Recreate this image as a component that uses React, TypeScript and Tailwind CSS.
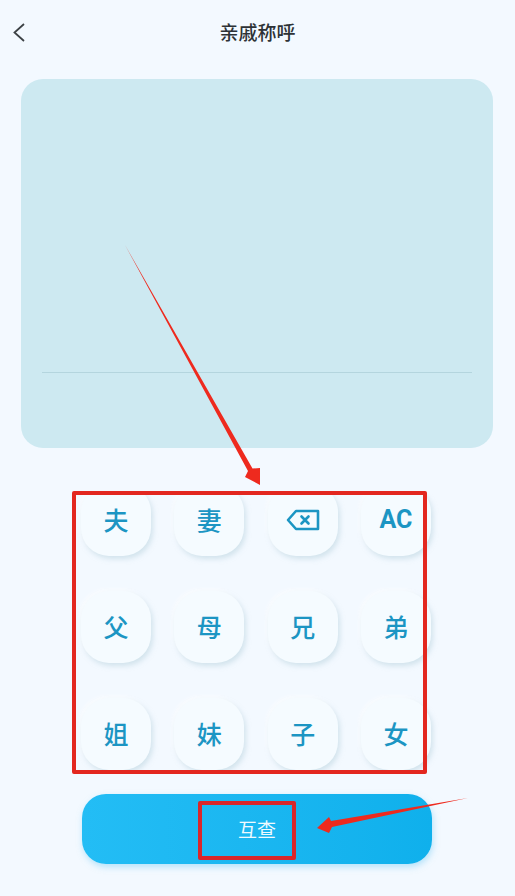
const rows = [
  ['夫', '妻', 'del', 'AC'],
  ['父', '母', '兄', '弟'],
  ['姐', '妹', '子', '女'],
];

function BackspaceIcon() {
  return (
    <svg width="34" height="22" viewBox="0 0 34 22" fill="none" stroke="#1c95c3" strokeWidth="2.6" strokeLinejoin="round" strokeLinecap="round">
      <path d="M10 2 H32 V20 H10 L2 11 Z" />
      <path d="M15.5 7.5 L22.5 14.5 M22.5 7.5 L15.5 14.5" />
    </svg>
  );
}

export default function App() {
  return (
    <div
      className="relative w-[515px] h-[896px] overflow-hidden bg-[#f3f9ff]"
      style={{ fontFamily: '"Noto Sans CJK SC", "Noto Sans", sans-serif' }}
    >
      {/* header */}
      <div className="relative flex items-center justify-center h-[64px] mb-[15px]">
        <svg className="absolute left-[12px] top-[22px]" width="14" height="21" viewBox="0 0 14 21" fill="none" stroke="#3c4145" strokeWidth="1.8">
          <path d="M12 2 L2.5 10.5 L12 19" />
        </svg>
        <span className="text-[19px] font-medium text-[#2d3236]">亲戚称呼</span>
      </div>

      {/* display panel */}
      <div className="ml-[21px] w-[472px] h-[369px] rounded-[22px] bg-[#cde9f1] px-[21px] pt-[293px]">
        <div className="h-px bg-[#b4d5de]" />
      </div>

      {/* keypad, top row is scrolled partly out */}
      <div className="mt-[46px] h-[276px] overflow-hidden pl-[81px]">
        <div className="-mt-[10px] grid grid-cols-[repeat(4,70px)] gap-x-[23.33px] gap-y-[35px]">
          {rows.flat().map((k) => (
            <div
              key={k}
              className="flex h-[72px] items-center justify-center rounded-[28px] bg-[#f5fbff] text-[25px] font-medium text-[#1c95c3] shadow-[2px_3px_5px_rgba(180,208,220,0.5),-2px_-2px_4px_rgba(255,255,255,0.6)]"
            >
              {k === 'del' ? <BackspaceIcon /> : k === 'AC' ? <span className="font-bold" style={{ fontFamily: '"Roboto", sans-serif' }}>AC</span> : k}
            </div>
          ))}
        </div>
      </div>

      {/* submit */}
      <div className="mt-[24px] ml-[82px] flex h-[70px] w-[350px] items-center justify-center rounded-[24px] bg-gradient-to-r from-[#23bdf5] to-[#0fb0ec] text-[19px] text-[#eefaff] shadow-[1px_3px_6px_rgba(120,205,245,0.5)]">
        互查
      </div>

      {/* red annotations drawn over the screenshot */}
      <div className="absolute left-[72px] top-[491px] h-[283px] w-[355px] rounded-[2px] border-4 border-[#e3271f]" />
      <div className="absolute left-[198px] top-[801px] h-[59px] w-[98px] rounded-[2px] border-4 border-[#d9262a]" />
      <svg className="absolute left-0 top-0" width="515" height="896" viewBox="0 0 515 896" fill="#ee2a1e">
        <path d="M125 245 L252.5 468.5 L260 468 L260 485 L245 477 L248 471 Z" />
        <path d="M468 798 L331 821 L329 817 L317 828 L329 833 L332 827 Z" />
      </svg>
    </div>
  );
}
